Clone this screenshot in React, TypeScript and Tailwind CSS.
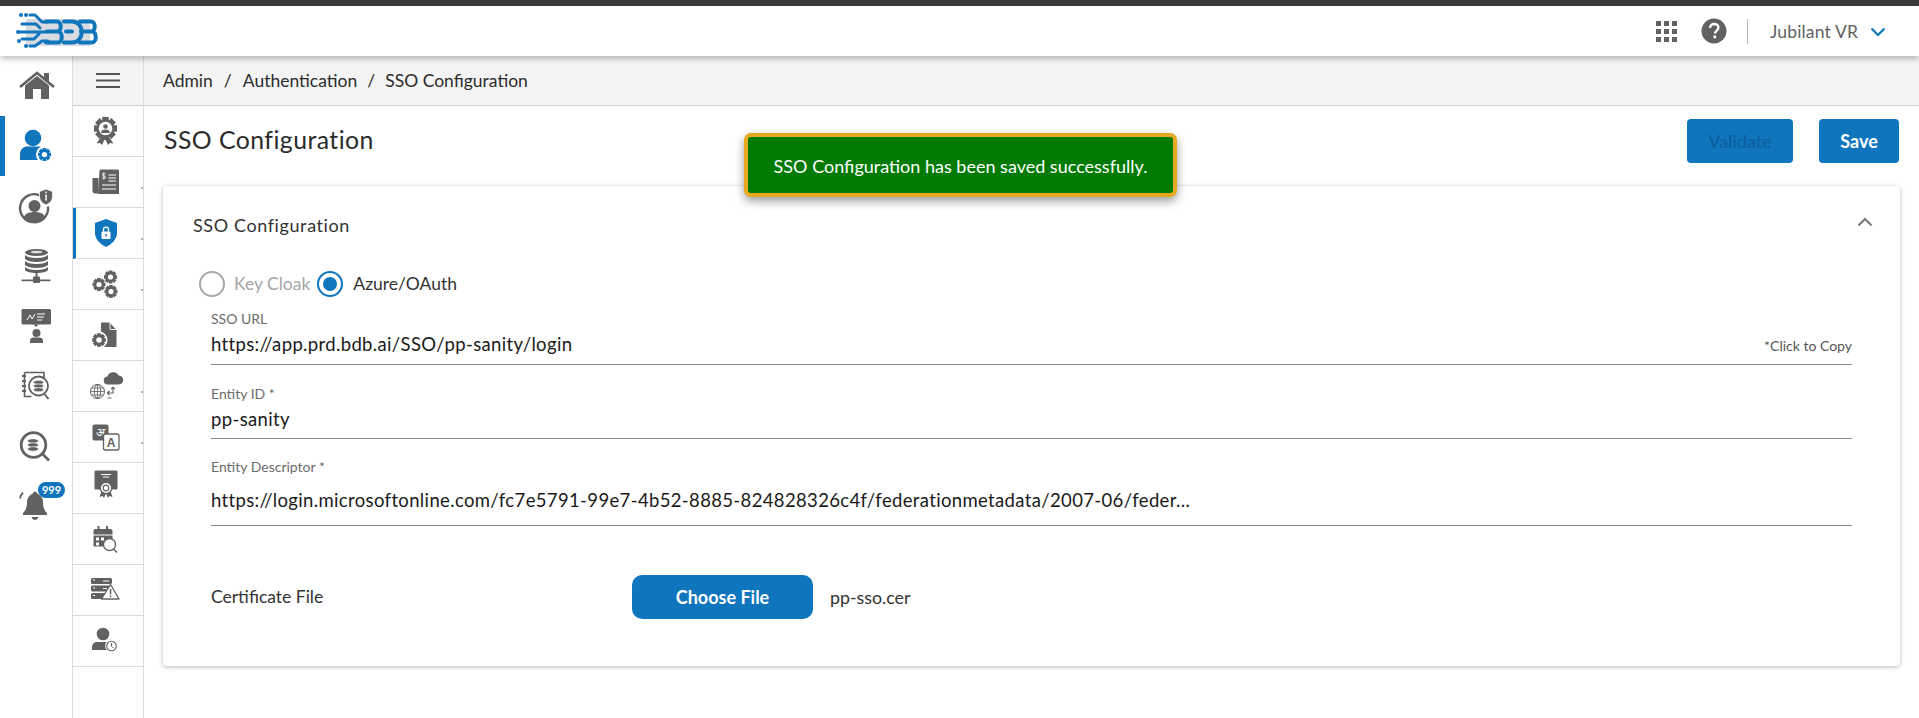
import React from "react";

const G = "#616161";
const B = "#0f75bc";

const Ic = ({ cx, cy, children }: { cx: number; cy: number; children: React.ReactNode }) => (
  <svg width="48" height="48" viewBox={`${cx - 24} ${cy - 24} 48 48`} fill={G}>
    {children}
  </svg>
);

const Gear = ({ x, y, r, fill = G, hole = "#fff" }: { x: number; y: number; r: number; fill?: string; hole?: string }) => (
  <g>
    {[0, 45, 90, 135].map((a) => (
      <rect key={a} x={x - r * 0.28} y={y - r} width={r * 0.56} height={r * 2} fill={fill} transform={`rotate(${a} ${x} ${y})`} />
    ))}
    <circle cx={x} cy={y} r={r * 0.76} fill={fill} />
    <circle cx={x} cy={y} r={r * 0.4} fill={hole} />
  </g>
);

const MiniDb = ({ x, y, w, h }: { x: number; y: number; w: number; h: number }) => (
  <g>
    {[0, 1, 2].map((i) => (
      <ellipse key={i} cx={x} cy={y - h / 3 + (i * h) / 3} rx={w / 2} ry={h / 5.5} fill={G} stroke="#fff" strokeWidth="0.6" />
    ))}
  </g>
);

const railIcons: { cy: number; active?: boolean; node: React.ReactNode }[] = [
  {
    cy: 86,
    node: (
      <>
        <path d="M44 73h5v11l-5-4z" />
        <path d="M20 87l17-14 17 14" fill="none" stroke={G} strokeWidth="2.6" />
        <path d="M25 85.500L37 76l12 9.500V99H41V89H33V99H25z" />
      </>
    ),
  },
  {
    cy: 146,
    active: true,
    node: (
      <>
        <circle cx="33" cy="138" r="8.300" fill={B} />
        <path d="M20 160v-6c0-5 4-7.500 7-7.500h12c2 0 3 1 3 1l-3 12.500z" fill={B} />
        <circle cx="44.500" cy="154.500" r="8.500" fill="#fff" />
        <Gear x={44.500} y={154.500} r={6.500} fill={B} />
      </>
    ),
  },
  {
    cy: 206,
    node: (
      <>
        <path d="M40 195.500a14 14 0 1 0 8 11" fill="none" stroke={G} strokeWidth="2.400" />
        <circle cx="34.500" cy="206" r="6" />
        <path d="M23.500 218c1-4 5-6 11-6s10 2 11 6c-3 3-7 4.500-11 4.500s-8-1.500-11-4.500z" />
        <path d="M46 189l6.500 2.500v5c0 4-3 7-6.500 8.500-3.500-1.500-6.500-4.500-6.500-8.500v-5z" stroke="#fff" strokeWidth="0.800" />
        <rect x="45.300" y="191.500" width="1.500" height="1.600" fill="#fff" />
        <rect x="45.300" y="194.500" width="1.500" height="6" fill="#fff" />
      </>
    ),
  },
  {
    cy: 266,
    node: (
      <>
        <ellipse cx="36.500" cy="252.500" rx="11.500" ry="3.500" />
        <ellipse cx="36.500" cy="252" rx="6" ry="1.300" fill="#ddd" />
        <path d="M25 255c2 2 6 3 11.500 3s9.500-1 11.500-3v4c-2 2-6 3-11.500 3s-9.500-1-11.500-3z" />
        <path d="M25 261c2 2 6 3 11.500 3s9.500-1 11.500-3v4c-2 2-6 3-11.500 3s-9.500-1-11.500-3z" />
        <path d="M25 267c2 2 6 3 11.500 3s9.500-1 11.500-3v3c-1 2-6 3-11.500 3s-10.500-1-11.500-3z" />
        <rect x="35.500" y="272" width="2" height="5" />
        <rect x="21.500" y="279.500" width="29" height="1.800" rx="0.900" />
        <rect x="33" y="276.500" width="7" height="6.500" rx="1" />
      </>
    ),
  },
  {
    cy: 326,
    node: (
      <>
        <rect x="21.500" y="309" width="29.500" height="15.500" rx="1.500" />
        <path d="M33.500 324.500h5l-2.500 2.500z" />
        <path d="M27 320l3-5 2 4 3-5" fill="none" stroke="#fff" strokeWidth="1" />
        <path d="M37 314h8M37 317h7M37 320h5" stroke="#fff" strokeWidth="1" />
        <circle cx="36.500" cy="333" r="4" />
        <path d="M30 343v-2.500c0-2 2-3 3.500-3h6c1.500 0 3.500 1 3.500 3V343z" />
      </>
    ),
  },
  {
    cy: 386,
    node: (
      <>
        <path d="M24.500 372.500h19.500v6" fill="none" stroke={G} strokeWidth="1.600" />
        <path d="M24.500 372.500v24h7" fill="none" stroke={G} strokeWidth="1.600" />
        <path d="M22 376h4M22 381h4M22 386h4M22 391h4" stroke={G} strokeWidth="1.800" />
        <circle cx="38.500" cy="386" r="9.500" fill="#fff" stroke={G} strokeWidth="1.800" />
        <MiniDb x={38.500} y={386} w={10} h={11} />
        <path d="M44.500 394l4 5" stroke={G} strokeWidth="2" />
      </>
    ),
  },
  {
    cy: 446,
    node: (
      <>
        <circle cx="33.500" cy="445" r="12.300" fill="none" stroke={G} strokeWidth="2.800" />
        <MiniDb x={33} y={445} w={11} h={12} />
        <path d="M42.500 454l6.500 6.500" stroke={G} strokeWidth="2.600" />
      </>
    ),
  },
  {
    cy: 506,
    node: (
      <>
        <path d="M35 491.500c1 0 2 1 2 2 4 1.500 6 5 6 9 0 5 1.500 8 4 10.500v2H23v-2c2.500-2.500 4-5.500 4-10.500 0-4 2-7.500 6-9 0-1 1-2 2-2z" />
        <path d="M31.500 517h7c-.5 2-2 2.800-3.500 2.800s-3-.8-3.500-2.800z" />
        <path d="M23 492.500c-1.500 1.500-2.500 3.500-3 6M47 492.500c1 1 1.800 2.300 2.300 3.500" fill="none" stroke={G} strokeWidth="1.800" />
      </>
    ),
  },
];

const subIcons: { cy: number; active?: boolean; mark?: boolean; node: React.ReactNode }[] = [
  {
    cy: 131,
    node: (
      <>
        <path d="M101 137l-4.500 6.500 3.500-.500 2 2 3-6.500 3 6.500 2-2 3.500.500-4.500-6.500z" />
        <Gear x={105.500} y={128.500} r={11.500} hole="#fff" />
        <circle cx="105.500" cy="128.500" r="6.800" fill="#fff" />
        <circle cx="105.500" cy="126.500" r="2.300" />
        <path d="M101 133c0-2.500 2-3.500 4.500-3.500s4.500 1 4.500 3.500z" />
      </>
    ),
  },
  {
    cy: 182,
    mark: true,
    node: (
      <>
        <path d="M92.500 178h6v15.500h-3.500c-1.500 0-2.500-1-2.500-2.500z" />
        <path d="M99.500 171c0-1 .800-1.500 1.500-1.500h16.500c.800 0 1.500.600 1.500 1.500v23h-21z" />
        <path d="M108.500 175h7.500M108.500 178h7.500M108.500 181h7.500M102 185h14M102 189h14" stroke="#fff" strokeWidth="1.100" />
        <path d="M105.500 174c-.8-1-3-1-3 .6 0 1.600 3 1 3 2.600 0 1.600-2.200 1.600-3.200.6M103.800 172.500v7" fill="none" stroke="#fff" strokeWidth="0.900" />
      </>
    ),
  },
  {
    cy: 233,
    active: true,
    mark: true,
    node: (
      <>
        <path d="M106 219l11 4v10c0 6-5 11-11 14-6-3-11-8-11-14v-10z" fill={B} />
        <rect x="101.500" y="231.500" width="9" height="7.500" rx="1" fill="#fff" />
        <path d="M103.500 231.500v-2c0-3.200 5-3.200 5 0v2" fill="none" stroke="#fff" strokeWidth="1.300" />
        <rect x="105.300" y="234" width="1.400" height="2.500" fill={B} />
      </>
    ),
  },
  {
    cy: 284,
    mark: true,
    node: (
      <>
        <Gear x={99} y={284.500} r={6.500} />
        <Gear x={110.500} y={277} r={6.500} />
        <Gear x={111} y={291.500} r={6.500} />
      </>
    ),
  },
  {
    cy: 335,
    node: (
      <>
        <path d="M101 323.500c0-.5.500-1 1-1h7.500l7 7.500v16c0 .5-.5 1-1 1h-14.500z" />
        <path d="M110 323v6.500h6" fill="none" stroke="#fff" strokeWidth="0.900" />
        <circle cx="99" cy="340" r="8.500" fill="#fff" />
        <Gear x={99} y={340} r={6.800} />
      </>
    ),
  },
  {
    cy: 386,
    mark: true,
    node: (
      <>
        <path d="M110 384.500a4 4 0 0 1-.5-8 6 6 0 0 1 11-1 4.500 4.500 0 0 1 .5 9z" transform="translate(-2 0)" />
        <circle cx="97.500" cy="391.500" r="7" fill="none" stroke={G} strokeWidth="1" />
        <ellipse cx="97.500" cy="391.500" rx="3.200" ry="7" fill="none" stroke={G} strokeWidth="0.900" />
        <path d="M90.500 391.500h14M91.500 388h12M91.500 395h12M97.500 384.500v14" stroke={G} strokeWidth="0.800" />
        <path d="M113 387v6h-5M107 393l2.500-2M107 393l2.500 2M113 387l-2 2.200M113 387l2 2.200M107.500 398h4" fill="none" stroke={G} strokeWidth="1.100" />
      </>
    ),
  },
  {
    cy: 437,
    mark: true,
    node: (
      <>
        <rect x="92.500" y="424.500" width="16" height="16" rx="2" />
        <text x="100.500" y="437" fontSize="12" fontFamily="'Noto Sans','DejaVu Sans',sans-serif" fill="#fff" textAnchor="middle">अ</text>
        <rect x="103.500" y="434" width="15.500" height="16" rx="2" fill="#fff" stroke={G} strokeWidth="1.300" />
        <text x="111" y="447" fontSize="12" fontWeight="700" fontFamily="'Liberation Sans',sans-serif" textAnchor="middle">A</text>
      </>
    ),
  },
  {
    cy: 488,
    node: (
      <>
        <path d="M94.500 472c0-1 .800-1.500 1.500-1.500h20c.800 0 1.500.500 1.500 1.500v16c0 1-.700 1.500-1.500 1.500h-20c-.700 0-1.500-.500-1.500-1.500z" />
        <path d="M101 474.500h10M103 477h6" stroke="#fff" strokeWidth="1" />
        <path d="M102 490l-2.500 7 3-1 1.500 2 2-5 2 5 1.500-2 3 1-2.500-7z" />
        <circle cx="106" cy="488" r="5.800" fill="#fff" stroke={G} strokeWidth="1.400" />
        <circle cx="106" cy="488" r="2.800" fill="none" stroke={G} strokeWidth="1.200" />
      </>
    ),
  },
  {
    cy: 539,
    node: (
      <>
        <path d="M93.500 531c0-1 .800-2 2-2h15c1.200 0 2 1 2 2v3.500h-19z" />
        <rect x="97.500" y="526" width="2" height="4" />
        <rect x="106" y="526" width="2" height="4" />
        <path d="M93.500 535.500h19v11h-19z" />
        <path d="M96 537.500h3v3h-3zM101 537.500h3v3h-3zM96 542.500h3v3h-3z" fill="#fff" />
        <circle cx="109.500" cy="544.500" r="6" fill="#fff" stroke={G} strokeWidth="1.300" />
        <path d="M113.500 549l3.500 3.500" stroke={G} strokeWidth="1.500" />
      </>
    ),
  },
  {
    cy: 590,
    node: (
      <>
        <rect x="91" y="578" width="21" height="6" rx="1.500" />
        <rect x="91" y="585.500" width="21" height="6" rx="1.500" />
        <rect x="91" y="593" width="21" height="6" rx="1.500" />
        <path d="M93 580h2M93 588h2M93 595.500h2M103 581h6M103 588.500h4" stroke="#fff" strokeWidth="1.200" />
        <path d="M110.500 584.500l8.500 14.500h-17.500z" fill="#fff" stroke={G} strokeWidth="1.300" strokeLinejoin="round" />
        <rect x="109.800" y="589" width="1.500" height="5.500" />
        <rect x="109.800" y="595.500" width="1.500" height="1.600" />
      </>
    ),
  },
  {
    cy: 641,
    node: (
      <>
        <circle cx="103" cy="634" r="6.300" />
        <path d="M92 650v-3c0-3 2.500-5 5-5h12l-1 8z" />
        <circle cx="111.500" cy="646" r="6.300" fill="#fff" />
        <circle cx="111.500" cy="646" r="4.800" fill="#fff" stroke={G} strokeWidth="1.100" />
        <path d="M111.500 643v3.200l1.800 1.800" fill="none" stroke={G} strokeWidth="1" />
      </>
    ),
  },
];

const Logo = () => (
  <svg width="86" height="40" viewBox="15 12 86 40" fill="none">
    <rect x="26" y="20" width="64" height="27" fill="#d8dce2" />
    <g stroke={B} strokeWidth="4" strokeLinecap="round" strokeLinejoin="round">
      <path d="M30 16h5l7 7h6M22 25h14l4 4M20 33h26M22 40h12l5-5M30 47h5l7-5h6" strokeWidth="3" />
      <path d="M46 22.500h11c5 0 5 10 0 10H47M47 32.500h11c5 0 5 11 0 11H46" />
      <path d="M64 22.500h8c13 0 13 21 0 21h-8M66 32.500h6" />
      <path d="M80 22.500h11c5 0 5 10 0 10H81M81 32.500h11c5 0 5 11 0 11H80" />
    </g>
    <g fill={B}>
      <circle cx="21" cy="16" r="2" />
      <circle cx="26" cy="16" r="2" />
      <circle cx="18" cy="33" r="2" />
      <circle cx="19" cy="42" r="2" />
      <circle cx="26" cy="47" r="2" />
    </g>
  </svg>
);

const Field = ({ label, value, extra, labelGap, bottomGap, after }: { label: string; value: string; extra?: string; labelGap: string; bottomGap: string; after: string }) => (
  <div className={`border-b border-[#8a8a8a] ${after}`}>
    <div className="text-[14px] leading-[18px] text-[#6b6b6b]">{label}</div>
    <div className={`flex items-center justify-between ${labelGap} ${bottomGap}`}>
      <span className="text-[18.500px] tracking-[0.35px] leading-[24px] text-[#1a1a1a] whitespace-nowrap">{value}</span>
      {extra ? <span className="text-[14px] leading-[18px] text-[#555] mt-1">{extra}</span> : null}
    </div>
  </div>
);

export default function App() {
  return (
    <div className="h-[718px] w-[1919px] overflow-hidden bg-white flex flex-col relative font-['Lato','Noto_Sans',sans-serif]">
      <div className="h-[6px] bg-[#3b3b3b] shrink-0" />
      <header className="h-[50px] shrink-0 bg-white flex items-center justify-between pl-[15px] pr-[33px] shadow-[0_3px_6px_rgba(0,0,0,0.25)] relative z-10">
        <Logo />
        <div className="flex items-center">
          <svg width="21" height="21" viewBox="0 0 21 21" fill="#616161">
            {[0, 8, 16].flatMap((y) =>
              [0, 8, 16].map((x) => <rect key={`${x}-${y}`} x={x} y={y} width="5" height="5" />)
            )}
          </svg>
          <svg className="ml-[24px]" width="26" height="26" viewBox="0 0 26 26">
            <circle cx="13" cy="13" r="12.500" fill="#616161" />
            <path d="M9 10c0-2.500 2-4 4.200-4 2.400 0 4.200 1.500 4.200 3.600 0 3-3.400 3-3.400 6" fill="none" stroke="#fff" strokeWidth="2.400" />
            <rect x="12.500" y="17.500" width="2.700" height="2.800" fill="#fff" />
          </svg>
          <div className="ml-[20px] w-px h-[25px] bg-[#b5b5b5]" />
          <span className="ml-[22px] mt-[2px] text-[17.500px] tracking-[0.15px] text-[#5f5f5f]">Jubilant VR</span>
          <svg className="ml-[12px] mt-[2px]" width="16" height="10" viewBox="0 0 16 10" fill="none">
            <path d="M1.500 1.500L8 8l6.500-6.500" stroke={B} strokeWidth="2.200" />
          </svg>
        </div>
      </header>

      <div className="flex-1 flex min-h-0">
        <nav className="w-[73px] shrink-0 border-r border-[#dcdcdc] flex flex-col">
          {railIcons.map((r) => (
            <div key={r.cy} className={`h-[60px] flex items-center justify-center relative ${r.active ? "border-l-[5px] border-[#0f75bc] pr-[5px]" : ""}`}>
              <Ic cx={36} cy={r.cy}>{r.node}</Ic>
              {r.cy === 506 ? (
                <span className="absolute left-[38px] top-[6px] w-[27px] h-[16px] rounded-full bg-[#0f75bc] text-white text-[11px] leading-[16px] text-center font-bold">999</span>
              ) : null}
            </div>
          ))}
        </nav>

        <aside className="w-[71px] shrink-0 border-r border-[#dcdcdc] flex flex-col">
          <div className="h-[50px] shrink-0 bg-[#f4f4f4] border-b border-[#cfcfcf] flex items-center justify-center">
            <svg width="24" height="16" viewBox="0 0 24 16" fill="#555">
              <rect y="0" width="24" height="2" />
              <rect y="6.500" width="24" height="2" />
              <rect y="13" width="24" height="2" />
            </svg>
          </div>
          {subIcons.map((s) => (
            <div key={s.cy} className={`h-[51px] shrink-0 border-b border-[#dcdcdc] flex items-center justify-center relative ${s.active ? "border-l-[3px] border-l-[#0f75bc] pr-[3px]" : ""}`}>
              <Ic cx={108} cy={s.cy}>{s.node}</Ic>
              {s.mark ? <span className="absolute right-0 top-[30px] w-[2px] h-[2px] bg-[#b0b0b0]" /> : null}
            </div>
          ))}
        </aside>

        <main className="flex-1 min-w-0 flex flex-col">
          <div className="h-[50px] shrink-0 bg-[#f4f4f4] border-b border-[#cfcfcf] flex items-center pl-[19px] pt-[2px] text-[17.500px] text-[#2b2b2b]">
            <span>Admin</span>
            <span className="mx-[11px]">/</span>
            <span>Authentication</span>
            <span className="mx-[10px]">/</span>
            <span>SSO Configuration</span>
          </div>

          <div className="flex items-start justify-between pt-[13px] pl-[20px] pr-[20px]">
            <h1 className="text-[24.800px] leading-[42px] text-[#2b2b2b] tracking-[0.45px]">SSO Configuration</h1>
            <div className="flex gap-[26px]">
              <button className="w-[106px] h-[44px] rounded-[4px] bg-[#0f75bc] text-[#0d5f9c] text-[18px] font-medium">Validate</button>
              <button className="w-[80px] h-[44px] rounded-[4px] bg-[#0f75bc] text-white text-[18px] font-bold">Save</button>
            </div>
          </div>

          <section className="mt-[23px] ml-[19px] mr-[19px] h-[480px] rounded-[4px] bg-white shadow-[0_1px_4px_rgba(0,0,0,0.3)] px-[30px] pt-[26px]">
            <div className="flex items-center justify-between">
              <h2 className="text-[18px] leading-[26px] text-[#333] tracking-[0.6px]">SSO Configuration</h2>
              <svg width="16" height="10" viewBox="0 0 16 10" fill="none" className="mr-[-3px] mb-[6px]">
                <path d="M1.500 8.500L8 2l6.500 6.500" stroke="#777" strokeWidth="2" />
              </svg>
            </div>
            <div className="pl-[18px] pr-[18px]">
              <div className="flex items-center mt-[33px] -ml-[12px] h-[26px]">
                <span className="w-[26px] h-[26px] rounded-full border-2 border-[#a9a9a9]" />
                <span className="ml-[9px] text-[17.500px] text-[#a6a6a6]">Key Cloak</span>
                <span className="ml-[7px] w-[26px] h-[26px] rounded-full border-2 border-[#0f75bc] flex items-center justify-center">
                  <span className="w-[14px] h-[14px] rounded-full bg-[#0f75bc]" />
                </span>
                <span className="ml-[10px] text-[17.500px] text-[#333]">Azure/OAuth</span>
              </div>
              <Field label="SSO URL" value="https://app.prd.bdb.ai/SSO/pp-sanity/login" extra="*Click to Copy" labelGap="mt-[4px]" bottomGap="pb-[8px]" after="mt-[13px]" />
              <Field label="Entity ID *" value="pp-sanity" labelGap="mt-[4px]" bottomGap="pb-[7px]" after="mt-[20px]" />
              <Field label="Entity Descriptor *" value="https://login.microsoftonline.com/fc7e5791-99e7-4b52-8885-824828326c4f/federationmetadata/2007-06/feder..." labelGap="mt-[12px]" bottomGap="pb-[13px]" after="mt-[19px]" />
              <div className="flex items-center mt-[49px]">
                <span className="w-[421px] text-[17.500px] text-[#333]">Certificate File</span>
                <button className="w-[181px] h-[44px] rounded-[10px] bg-[#0f75bc] text-white text-[18px] font-bold">Choose File</button>
                <span className="ml-[17px] text-[17.800px] text-[#333]">pp-sso.cer</span>
              </div>
            </div>
          </section>
        </main>
      </div>

      <div className="absolute left-[744px] top-[133px] w-[433px] h-[64px] rounded-[7px] bg-[#007a00] border-[4px] border-[#e6a91f] shadow-[0_4px_10px_rgba(0,0,0,0.4)] flex items-center justify-center pt-[3px] text-white text-[18px] z-20">
        SSO Configuration has been saved successfully.
      </div>
    </div>
  );
}
